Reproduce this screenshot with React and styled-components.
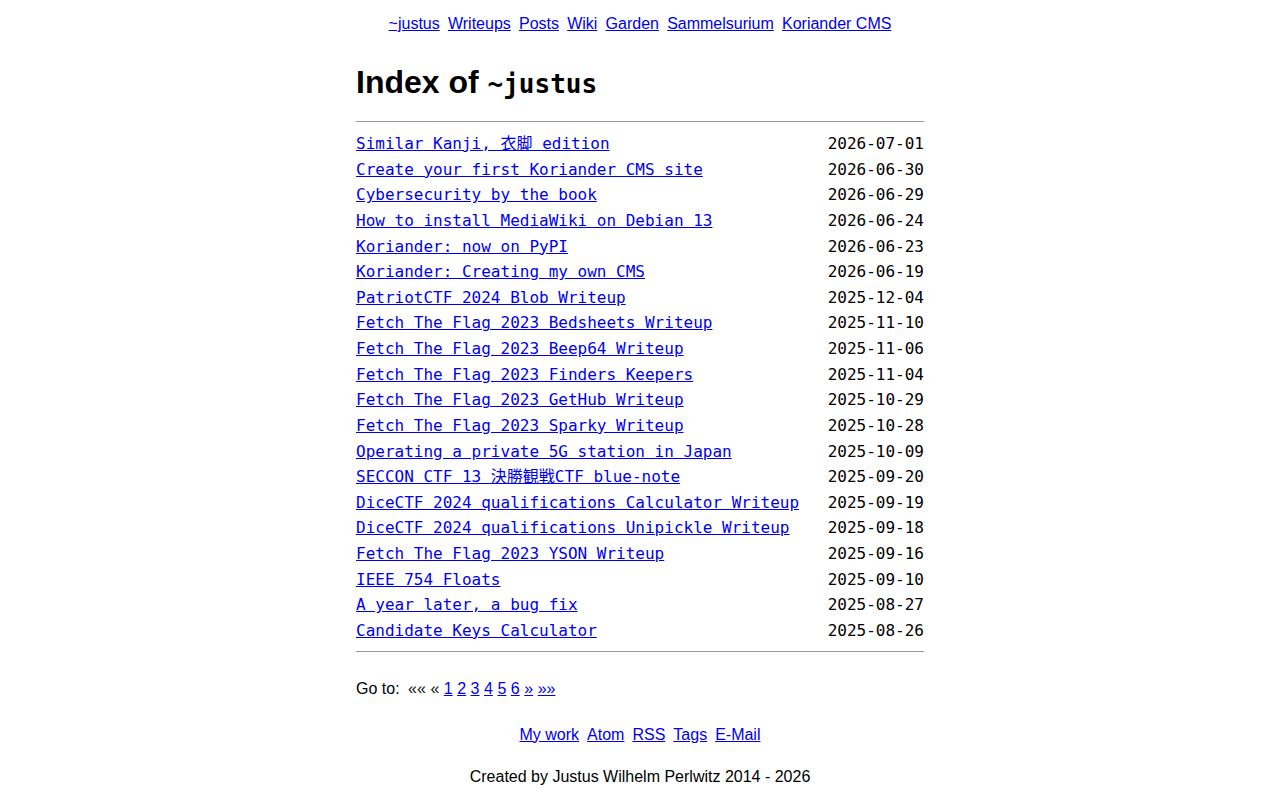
import React from "react";
import styled, { createGlobalStyle } from "styled-components";

const Global = createGlobalStyle`
  html, body { margin: 0; padding: 0; background: #fff; }
  body { font-family: "Liberation Sans", Arial, sans-serif; font-size: 16px; color: #000; }
  a { color: #0000ee; }
`;

const Page = styled.div`
  padding-top: 15px;
`;

const Nav = styled.nav`
  display: flex;
  justify-content: center;
  gap: 8.2px;
  line-height: 18px;
`;

const Main = styled.main`
  width: 568px;
  margin: 0 auto;
`;

const Title = styled.h1`
  font-size: 32px;
  font-weight: bold;
  margin: 31px 0 18px;
  line-height: 37px;
`;

const Code = styled.code`
  font-family: "DejaVu Sans Mono", monospace;
  font-size: 26px;
  font-weight: bold;
`;

const Rule = styled.hr`
  border: none;
  border-top: 1px solid #999;
  margin: ${(p) => p.$top || 0}px 0 0;
`;

const List = styled.div`
  font-family: "DejaVu Sans Mono", "Noto Sans CJK JP", monospace;
  font-size: 16px;
  line-height: 25.63px;
  padding: 9px 0 0;
`;

const Row = styled.div`
  display: flex;
  justify-content: space-between;
`;

const DateText = styled.span`
  color: #000;
`;

const Pager = styled.div`
  margin-top: 28px;
  display: flex;
  align-items: baseline;
  gap: 4.5px;
`;

const PagerLabel = styled.span`
  margin-right: 4px;
`;

const Arrow = styled.span`
  color: #111;
`;

const PageLink = styled.a``;

const FooterNav = styled.div`
  display: flex;
  justify-content: center;
  gap: 8px;
  margin-top: 28px;
`;

const Credit = styled.p`
  text-align: center;
  margin: 24px 0 0;
`;

const navLinks = ["~justus", "Writeups", "Posts", "Wiki", "Garden", "Sammelsurium", "Koriander CMS"];

const posts = [
  ["Similar Kanji, 衣脚 edition", "2026-07-01"],
  ["Create your first Koriander CMS site", "2026-06-30"],
  ["Cybersecurity by the book", "2026-06-29"],
  ["How to install MediaWiki on Debian 13", "2026-06-24"],
  ["Koriander: now on PyPI", "2026-06-23"],
  ["Koriander: Creating my own CMS", "2026-06-19"],
  ["PatriotCTF 2024 Blob Writeup", "2025-12-04"],
  ["Fetch The Flag 2023 Bedsheets Writeup", "2025-11-10"],
  ["Fetch The Flag 2023 Beep64 Writeup", "2025-11-06"],
  ["Fetch The Flag 2023 Finders Keepers", "2025-11-04"],
  ["Fetch The Flag 2023 GetHub Writeup", "2025-10-29"],
  ["Fetch The Flag 2023 Sparky Writeup", "2025-10-28"],
  ["Operating a private 5G station in Japan", "2025-10-09"],
  ["SECCON CTF 13 決勝観戦CTF blue-note", "2025-09-20"],
  ["DiceCTF 2024 qualifications Calculator Writeup", "2025-09-19"],
  ["DiceCTF 2024 qualifications Unipickle Writeup", "2025-09-18"],
  ["Fetch The Flag 2023 YSON Writeup", "2025-09-16"],
  ["IEEE 754 Floats", "2025-09-10"],
  ["A year later, a bug fix", "2025-08-27"],
  ["Candidate Keys Calculator", "2025-08-26"],
];

const footerLinks = ["My work", "Atom", "RSS", "Tags", "E-Mail"];

export default function App() {
  return (
    <Page>
      <Global />
      <Nav>
        {navLinks.map((l) => (
          <a key={l} href="#">{l}</a>
        ))}
      </Nav>
      <Main>
        <Title>
          Index of <Code>~justus</Code>
        </Title>
        <Rule />
        <List>
          {posts.map(([t, d]) => (
            <Row key={t}>
              <a href="#">{t}</a>
              <DateText>{d}</DateText>
            </Row>
          ))}
        </List>
        <Rule $top={7} />
        <Pager>
          <PagerLabel>Go to:</PagerLabel>
          <Arrow>««</Arrow>
          <Arrow>«</Arrow>
          {[1, 2, 3, 4, 5, 6].map((n) => (
            <PageLink key={n} href="#">{n}</PageLink>
          ))}
          <PageLink href="#">»</PageLink>
          <PageLink href="#">»»</PageLink>
        </Pager>
      </Main>
      <FooterNav>
        {footerLinks.map((l) => (
          <a key={l} href="#">{l}</a>
        ))}
      </FooterNav>
      <Credit>Created by Justus Wilhelm Perlwitz 2014 - 2026</Credit>
    </Page>
  );
}
